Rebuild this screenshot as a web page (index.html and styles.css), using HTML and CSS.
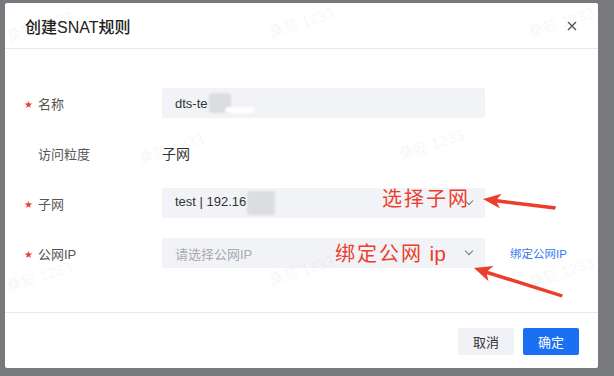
FILE: index.html
```html
<!DOCTYPE html>
<html lang="zh-CN">
<head>
    <meta charset="UTF-8">
    <meta name="viewport" content="width=device-width, initial-scale=1.0">
    <title>创建SNAT规则</title>
    <link rel="stylesheet" href="styles.css">
</head>
<body>

    <div class="dialog">
        <div class="dialog-header">
            <h2>创建SNAT规则</h2>
            <span class="close">
                <svg width="10" height="10" viewBox="0 0 10 10"><path d="M1 1L9 9M9 1L1 9" stroke="#555" stroke-width="1.4" fill="none"/></svg>
            </span>
        </div>

        <div class="dialog-body">
            <div class="form-row">
                <span class="label required">名称</span>
                <div class="input">dts-te<span class="mask"></span><span class="mask-light"></span></div>
            </div>
            <div class="form-row">
                <span class="label">访问粒度</span>
                <div class="value">子网</div>
            </div>
            <div class="form-row">
                <span class="label required">子网</span>
                <div class="input select">
                    <span>test | 192.16<span class="mask"></span></span>
                    <span class="chevron"></span>
                </div>
            </div>
            <div class="form-row">
                <span class="label required">公网IP</span>
                <div class="input select">
                    <span class="placeholder">请选择公网IP</span>
                    <span class="chevron"></span>
                </div>
                <a class="link">绑定公网IP</a>
            </div>
        </div>

        <div class="dialog-footer">
            <button class="btn">取消</button>
            <button class="btn primary">确定</button>
        </div>

        <!-- watermark -->
        <span class="wm" style="left:0;top:12px">桑懿 1233</span>
        <span class="wm" style="left:262px;top:8px">桑懿 1233</span>
        <span class="wm" style="left:522px;top:8px">桑懿 1233</span>
        <span class="wm" style="left:132px;top:134px">桑懿 1233</span>
        <span class="wm" style="left:392px;top:130px">桑懿 1233</span>
        <span class="wm" style="left:0;top:262px">桑懿 1233</span>
        <span class="wm" style="left:262px;top:256px">桑懿 1233</span>
        <span class="wm" style="left:522px;top:258px">桑懿 1233</span>

        <!-- annotations -->
        <svg class="arrows" width="593" height="365" viewBox="0 0 593 365">
            <polygon points="490,195.8 551,203.3 550,206.7 490,199.4" fill="#ea3f2c"/>
            <polygon points="478,196 495,205.6 490.9,197.6 496.8,190.8" fill="#ea3f2c"/>
            <polygon points="481,267.2 558,291.4 556.6,294.6 481,270.9" fill="#ea3f2c"/>
            <polygon points="469,265 483.5,278.3 481.3,269 488.6,263" fill="#ea3f2c"/>
        </svg>
        <span class="note note-subnet">选择子网</span>
        <span class="note note-ip">绑定公网 <span class="latin">ip</span></span>
    </div>

</body>
</html>
```

FILE: styles.css
```css
body {
    margin: 0;
    height: 376px;
    overflow: hidden;
    background: #77797d;
    font-family: 'Liberation Sans', 'Noto Sans CJK SC', sans-serif;
    color: #333;
}

.dialog {
    position: relative;
    width: 593px;
    height: 365px;
    margin: 3px 0 0 5px;
    background: #fff;
    border-radius: 2px;
    display: flex;
    flex-direction: column;
    overflow: hidden;
}

.dialog-header {
    height: 45px;
    padding: 0 20px;
    border-bottom: 1px solid #e8e9ec;
    display: flex;
    align-items: center;
    justify-content: space-between;
}

.dialog-header h2 {
    margin: 0;
    font-size: 16px;
    font-weight: 500;
    color: #222;
}

.close {
    display: flex;
    margin-right: 1px;
}

.dialog-body {
    flex: 1;
    padding: 39px 0 0 19px;
    display: flex;
    flex-direction: column;
    gap: 20px;
}

.form-row {
    display: flex;
    align-items: center;
    height: 30px;
}

.label {
    width: 124px;
    padding-left: 14px;
    font-size: 13px;
    color: #555;
}

.label.required {
    width: 138px;
    padding-left: 0;
}

.label.required::before {
    content: '\2605';
    display: inline-block;
    width: 14px;
    color: #e8412f;
    font-family: 'DejaVu Sans', sans-serif;
    font-size: 10px;
    vertical-align: 1px;
}

.input {
    width: 310px;
    height: 30px;
    padding: 0 0 0 13px;
    background: #f2f3f7;
    border-radius: 2px;
    font-size: 13px;
    color: #333;
    display: flex;
    align-items: center;
}

.input.select {
    width: 297px;
    padding-right: 13px;
    justify-content: space-between;
}

.mask {
    display: inline-block;
    width: 22px;
    height: 20px;
    margin-left: 1px;
    background: #dcdde1;
    border-radius: 3px;
    filter: blur(1px);
    vertical-align: middle;
}

.mask-light {
    display: inline-block;
    width: 30px;
    height: 6px;
    margin-top: 14px;
    margin-left: -6px;
    background: #fff;
    border-radius: 3px;
    filter: blur(1px);
}

.select .mask {
    width: 28px;
    height: 24px;
}

.placeholder {
    color: #a9abb1;
}

.chevron {
    width: 5px;
    height: 5px;
    border-right: 1.4px solid #777;
    border-bottom: 1.4px solid #777;
    transform: rotate(45deg);
    margin-top: -4px;
}

.value {
    font-size: 14px;
    color: #333;
}

.link {
    margin-left: 25px;
    font-size: 11.5px;
    color: #3a7bf0;
}

.dialog-footer {
    height: 56px;
    border-top: 1px solid #e8e9ec;
    padding: 15px 19px 0 0;
    box-sizing: border-box;
    display: flex;
    justify-content: flex-end;
    align-items: flex-start;
    gap: 9px;
}

.btn {
    width: 56px;
    height: 27px;
    border: none;
    border-radius: 2px;
    background: #f1f2f6;
    color: #333;
    font-family: inherit;
    font-size: 13px;
}

.btn.primary {
    background: #1b6ff2;
    color: #fff;
}

.wm {
    position: absolute;
    font-size: 15px;
    color: rgba(0, 0, 0, 0.055);
    transform: rotate(-18deg);
    white-space: nowrap;
    pointer-events: none;
}

.arrows {
    position: absolute;
    left: 0;
    top: 0;
    pointer-events: none;
}

.note {
    position: absolute;
    font-family: 'Noto Sans CJK SC', sans-serif;
    font-size: 20px;
    letter-spacing: 2px;
    color: #ea3f2c;
    line-height: 1;
    white-space: nowrap;
}

.note .latin {
    font-family: 'Liberation Sans', sans-serif;
    font-size: 21px;
    letter-spacing: 0;
}

.note-subnet {
    left: 377px;
    top: 185px;
}

.note-ip {
    left: 330px;
    top: 240px;
}
```
